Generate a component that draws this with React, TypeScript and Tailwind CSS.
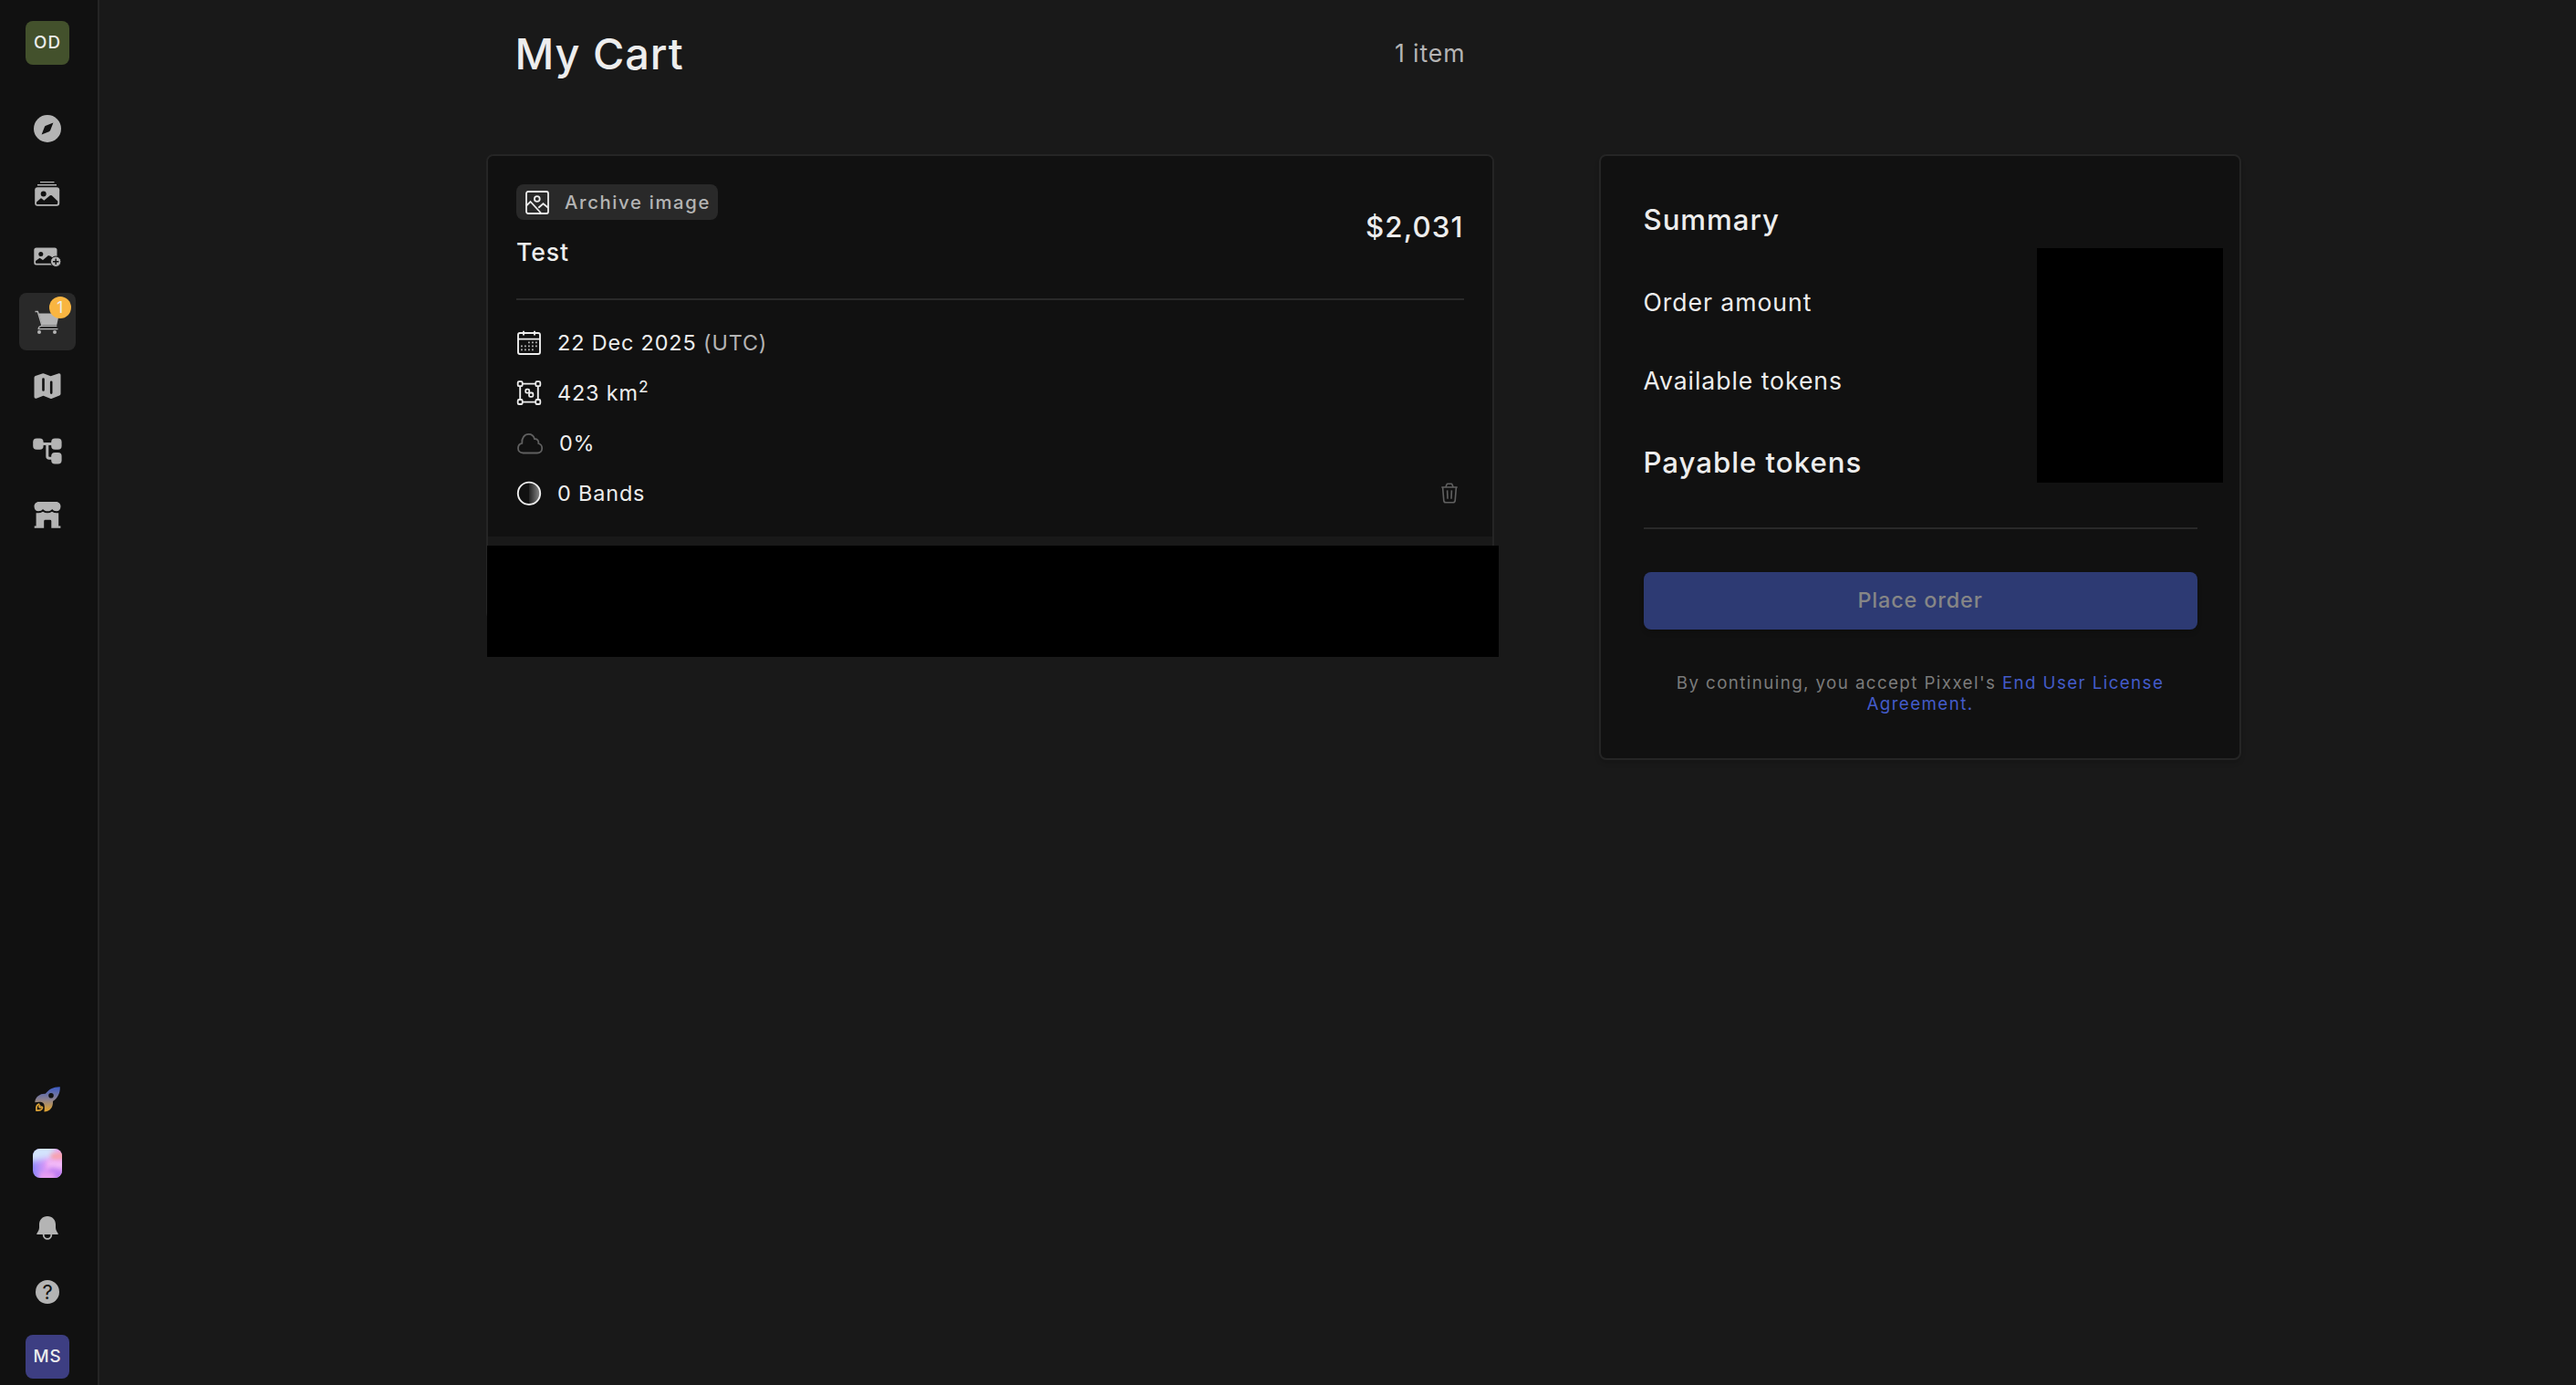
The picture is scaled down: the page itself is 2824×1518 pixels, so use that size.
import type { ReactNode } from 'react'

const Icon = ({ children, size = 32 }: { children: ReactNode; size?: number }) => (
  <svg width={size} height={size} viewBox={`0 0 ${size} ${size}`} fill="none" className="flex-none">
    {children}
  </svg>
)

const CompassIcon = () => (
  <Icon>
    <circle cx="16" cy="16" r="15" fill="#b4b4b4" />
    <path d="M22.4 9.6L19.2 17.8Q18.9 18.8 17.8 19.2L9.6 22.4L12.8 14.2Q13.1 13.2 14.2 12.8Z" fill="#111111" />
  </Icon>
)

const GalleryIcon = () => (
  <Icon>
    <path d="M8 3.6H23.5M5 6.8H26" stroke="#b4b4b4" strokeWidth="1.4" />
    <rect x="2.2" y="9.2" width="27" height="20.6" rx="3" fill="#b4b4b4" />
    <circle cx="11.7" cy="16.6" r="3" fill="#111111" />
    <path d="M4 27.5V25.5L8.5 21.5Q9 21.2 9.5 21.5L12.3 23.8L18.8 18.2Q19.8 17.6 20.8 18.2L27.3 24.5V26.5Q27.3 28 25.8 28H5Q4 28 4 27.5Z" fill="#111111" />
  </Icon>
)

const ImagePlusIcon = () => (
  <Icon>
    <rect x="1.3" y="5.4" width="25.2" height="19" rx="2.5" fill="#b4b4b4" />
    <circle cx="8.8" cy="12.4" r="2.5" fill="#111111" />
    <path d="M3 22V20L7.5 16.8L11 19L17 14L19.5 14.8L24.5 19V22.8H4Q3 22.8 3 22Z" fill="#111111" />
    <circle cx="25.2" cy="20.7" r="5.7" fill="#b4b4b4" stroke="#111111" strokeWidth="1" />
    <path d="M25.2 17.5V23.9M22 20.7H28.4" stroke="#111111" strokeWidth="1.4" />
  </Icon>
)

const CartIcon = () => (
  <Icon>
    <path d="M6.6 6.4H29L26.2 19.4H10.3Z" fill="#b4b4b4" />
    <path d="M2.5 4.4H5.3L10 19.8" stroke="#b4b4b4" strokeWidth="1.5" />
    <path d="M26.3 20.3H9Q6.3 20.6 6.2 23.6H27.5" stroke="#b4b4b4" strokeWidth="1.3" />
    <circle cx="7" cy="27" r="2" fill="#b4b4b4" />
    <circle cx="24" cy="27" r="2" fill="#b4b4b4" />
  </Icon>
)

const MapIcon = () => (
  <Icon>
    <path
      d="M1.5 7Q1.5 5.6 2.8 5L10.3 2.4Q11.3 2 12.3 2.4L19.5 5.3L28.5 2.3Q30.5 2 30.5 4V24.5Q30.5 26 29.2 26.6L21 29.8Q20 30.2 19 29.8L11.5 26.8L3.8 29.7Q1.5 30.2 1.5 28Z"
      fill="#b4b4b4"
    />
    <path d="M11.5 8.6V20.4M20.2 11.8V23.6" stroke="#111111" strokeWidth="2.6" strokeLinecap="round" />
  </Icon>
)

const WorkflowIcon = () => (
  <Icon>
    <path d="M8 8.5H26M15.8 8.5V22Q15.8 24.3 18 24.3H26" stroke="#b4b4b4" strokeWidth="3" />
    <rect x="0.2" y="2.4" width="11.4" height="12.4" rx="4" fill="#b4b4b4" />
    <rect x="20.2" y="2.4" width="11.4" height="12.4" rx="4" fill="#b4b4b4" />
    <rect x="20.2" y="18" width="11.4" height="12.4" rx="4" fill="#b4b4b4" />
  </Icon>
)

const StoreIcon = () => (
  <Icon>
    <path
      d="M6.5 2H25.5C28.5 2 30.5 4.5 30.5 7C30.5 10.5 28.5 12.3 26 12.3C23.6 12.3 22.3 11.3 21.2 10C20 11.6 18.3 12.3 16.2 12.3C14 12.3 12.3 11.6 11 10C9.8 11.3 8.4 12.3 6 12.3C3.5 12.3 1.5 10.5 1.5 7C1.5 4.5 3.5 2 6.5 2Z"
      fill="#b4b4b4"
    />
    <path
      d="M3.6 14.2Q8 14.8 11 12.8Q16 15.8 21 12.8Q24 14.8 28.2 14.2V28.4H30.4V30.8H20.3V23.2Q20.3 21.8 18.8 21.8H13.7Q12.2 21.8 12.2 23.2V30.8H1.7V28.4H3.6Z"
      fill="#b4b4b4"
    />
  </Icon>
)

const RocketIcon = () => (
  <Icon>
    <defs>
      <linearGradient id="rocket" x1="16" y1="2" x2="16" y2="30" gradientUnits="userSpaceOnUse">
        <stop stopColor="#3b5bc8" />
        <stop offset="0.5" stopColor="#8a8190" />
        <stop offset="0.9" stopColor="#d9a036" />
      </linearGradient>
    </defs>
    <path
      d="M29.8 2.2C22.5 2 17.5 4.8 13.8 9.8C8.5 9.4 2.5 12.8 2.3 19.3C6.5 18.3 10 18.6 11.4 20C13 21.6 13.2 25.5 12.4 29.6C19 29.2 22.4 24.5 22 18C27 14.5 30 9.5 29.8 2.2Z"
      fill="url(#rocket)"
    />
    <circle cx="20" cy="11.8" r="2.8" fill="#111111" />
    <path d="M7.3 20.8C4.2 21.5 3.6 25 4 28C7 28.4 10.2 27.8 10.5 25C10.3 23.6 9 24.4 7.8 24.8C6.7 24.8 6.7 23.2 8.3 22.2" stroke="#d9a036" strokeWidth="1.8" />
  </Icon>
)

const BellIcon = () => (
  <Icon>
    <circle cx="16" cy="23.5" r="4.3" stroke="#b4b4b4" strokeWidth="1.8" />
    <path
      d="M16 3C10.5 3 7 7 7 12V15.5C7 18 5.6 19.8 4.2 22.2Q4 23 4.8 23H27.2Q28 23 27.8 22.2C26.4 19.8 25 18 25 15.5V12C25 7 21.5 3 16 3Z"
      fill="#b4b4b4"
    />
  </Icon>
)

const HelpIcon = () => (
  <div className="flex h-[26px] w-[26px] items-center justify-center rounded-full bg-[#b4b4b4] text-[22px] text-[#111111]">
    ?
  </div>
)

const GradientIcon = () => (
  <div className="relative h-8 w-8 overflow-hidden rounded-lg bg-linear-to-r from-[#8f86fb] via-[#e59bf6] to-[#eda6f6]">
    <div className="absolute -left-2 -top-2 h-5 w-8 -rotate-12 bg-[#d3e4fd] blur-[3px]" />
    <div className="absolute -right-2 top-1 h-2 w-5 -rotate-6 bg-[#f7a3ae] blur-[2px]" />
    <div className="absolute -right-1 top-3.5 h-2.5 w-5 rotate-6 bg-[#f6bdf7] blur-[2px]" />
    <div className="absolute -bottom-1.5 -right-1 h-4 w-5 rotate-12 bg-[#bd7cf2] blur-[3px]" />
    <div className="absolute -bottom-1.5 left-2 h-3 w-4 bg-[#e79df2] blur-[2px]" />
  </div>
)

const ArchiveIcon = () => (
  <Icon size={26}>
    <rect x="1" y="1" width="24" height="24" rx="2" stroke="#ededed" strokeWidth="1.8" />
    <circle cx="12.8" cy="9" r="2.9" stroke="#ededed" strokeWidth="1.8" />
    <path d="M1 16.5L5.5 12L17.5 25M14.3 18.8L19.5 14.3L25 18.8" stroke="#ededed" strokeWidth="1.8" />
  </Icon>
)

const CalendarIcon = () => (
  <Icon size={28}>
    <rect x="2" y="3" width="24" height="23" rx="2" stroke="#ededed" strokeWidth="1.9" />
    <path d="M2 9.6H26M8 0.8V5.4M20 0.8V5.4" stroke="#ededed" strokeWidth="1.9" />
    <path d="M13 13.3H23.5M5 17.3H23.5M5 21.3H19.5" stroke="#b4b4b4" strokeWidth="1.8" strokeDasharray="1.8 2.2" />
  </Icon>
)

const AreaIcon = () => (
  <Icon size={28}>
    <path d="M7 3.6H21M7 23.6H21M4.2 6.4V21M23.8 6.4V21" stroke="#ededed" strokeWidth="1.9" />
    <g stroke="#ededed" strokeWidth="1.8">
      <rect x="1.7" y="1.2" width="5" height="5" rx="1.3" />
      <rect x="21.3" y="1.2" width="5" height="5" rx="1.3" />
      <rect x="1.7" y="21" width="5" height="5" rx="1.3" />
      <rect x="21.3" y="21" width="5" height="5" rx="1.3" />
      <rect x="10.2" y="9.7" width="4" height="4" rx="1.4" />
      <rect x="14" y="13.5" width="4.4" height="4.4" rx="1.4" />
    </g>
  </Icon>
)

const CloudIcon = () => (
  <Icon size={30}>
    <path
      d="M7.5 25.5C4 25.5 2 23.2 2 20.3C2 17.5 3.8 15.2 6.3 14.8C5.8 9 9 4.8 13.5 4.8C17 4.8 19.2 7 20 10C23 9.8 24.8 12 24.3 15C26.8 15.8 28.2 17.8 28.2 20.2C28.2 23.3 26 25.5 23 25.5Z"
      stroke="#606060"
      strokeWidth="1.8"
    />
  </Icon>
)

const BandsIcon = () => (
  <Icon size={28}>
    <defs>
      <linearGradient id="bands" x1="14" y1="0" x2="26" y2="0" gradientUnits="userSpaceOnUse">
        <stop stopColor="#222222" />
        <stop offset="1" stopColor="#8a8a8a" />
      </linearGradient>
    </defs>
    <path d="M14 1.5A12.3 12.3 0 0 1 14 26.1Z" fill="url(#bands)" />
    <circle cx="14" cy="13.8" r="12.2" stroke="#ededed" strokeWidth="1.9" />
  </Icon>
)

const TrashIcon = () => (
  <svg width="18" height="23" viewBox="0 0 18 23" fill="none" stroke="#606060" strokeWidth="1.6">
    <path d="M0.3 5H17.7M5 4.8L6 2Q6.2 1.3 7 1.3H11Q11.8 1.3 12 2L13 4.8" />
    <path d="M1.6 5L2.8 19.6Q3 21.7 5 21.7H13Q15 21.7 15.2 19.6L16.4 5" />
    <path d="M6.6 8.4L7 17.8M11.4 8.4L11 17.8" />
  </svg>
)

const Avatar = ({ label, className }: { label: string; className: string }) => (
  <div className={`flex h-12 w-12 items-center justify-center rounded-lg text-[18.75px] font-medium tracking-[1px] text-[#ededed] ${className}`}>
    {label}
  </div>
)

const NavItem = ({ children, active, badge }: { children: ReactNode; active?: boolean; badge?: number }) => (
  <div className={`relative flex h-[62.5px] w-[62.5px] flex-none items-center justify-center rounded-lg ${active ? 'bg-[#292929]' : ''}`}>
    {children}
    {badge && (
      <span className="absolute right-[5.5px] top-[4px] flex h-6 w-6 items-center justify-center rounded-full bg-[#f9b541] text-[17px] text-[#ededed]">
        {badge}
      </span>
    )}
  </div>
)

const Sidebar = () => (
  <aside className="flex w-[109px] flex-none flex-col items-center justify-between border-r-2 border-[#252525] bg-[#111111] pr-[3px] pt-[15.75px]">
    <nav className="flex flex-col gap-2">
      <div className="mb-[23.5px]">
        <NavItem>
          <Avatar label="OD" className="bg-[#43512c]" />
        </NavItem>
      </div>
      <NavItem><CompassIcon /></NavItem>
      <NavItem><GalleryIcon /></NavItem>
      <NavItem><ImagePlusIcon /></NavItem>
      <NavItem active badge={1}><CartIcon /></NavItem>
      <NavItem><MapIcon /></NavItem>
      <NavItem><WorkflowIcon /></NavItem>
      <NavItem><StoreIcon /></NavItem>
    </nav>
    <nav className="flex flex-col gap-2">
      <NavItem><RocketIcon /></NavItem>
      <NavItem><GradientIcon /></NavItem>
      <NavItem><BellIcon /></NavItem>
      <NavItem><HelpIcon /></NavItem>
      <NavItem><Avatar label="MS" className="bg-[#3d3e82]" /></NavItem>
    </nav>
  </aside>
)

const DetailRow = ({ icon, children }: { icon: ReactNode; children: ReactNode }) => (
  <div className="flex h-[54.8px] items-center text-[23.4px] tracking-[0.86px]">
    {icon}
    <span className="ml-[17px] pb-px">{children}</span>
  </div>
)

const CartItem = () => (
  <div className="relative h-[511px] rounded-lg border-2 border-[#252525] bg-[#191919]">
    <div className="h-[417px] rounded-t-md bg-[#111111] px-[31px] pt-[31px]">
      <div className="flex h-[93px] items-center justify-between">
        <div className="h-full">
          <div className="flex h-[39px] w-[220.5px] items-center rounded-lg bg-[#292929] pl-[9.5px] text-[20.3px] font-medium tracking-[1.65px] text-[#b4b4b4]">
            <ArchiveIcon />
            <span className="ml-[17.5px] whitespace-nowrap pt-0.5">Archive image</span>
          </div>
          <p className="mt-[15px] text-[26.6px] font-medium leading-10 tracking-[0.94px]">Test</p>
        </div>
        <p className="pt-px text-[31.25px] font-medium tracking-[1.1px]">$2,031</p>
      </div>
      <hr className="mt-8 border-t-2 border-[#292929]" />
      <div className="mt-5 flex items-end justify-between">
        <div>
          <DetailRow icon={<CalendarIcon />}>
            22 Dec 2025 <span className="text-[#b4b4b4]">(UTC)</span>
          </DetailRow>
          <DetailRow icon={<AreaIcon />}>
            <span className="flex">
              423 km<span className="-mt-0.5 text-[17.5px]">2</span>
            </span>
          </DetailRow>
          <DetailRow icon={<CloudIcon />}>0%</DetailRow>
          <DetailRow icon={<BandsIcon />}>0 Bands</DetailRow>
        </div>
        <button className="mb-4 mr-[6.5px]">
          <TrashIcon />
        </button>
      </div>
    </div>
    <div className="absolute -left-px top-[427px] h-[122px] w-[1108.5px] bg-black" />
  </div>
)

const Summary = () => (
  <section className="relative h-[663.5px] w-[704px] flex-none rounded-lg border-2 border-[#252525] bg-[#111111] px-[46.5px] pt-[49.5px] tracking-[0.94px] shadow-md">
    <h2 className="text-[31.25px] font-medium leading-10">Summary</h2>
    <p className="mt-[50.5px] text-[26.6px] leading-10">Order amount</p>
    <p className="mt-[46px] text-[26.6px] leading-10">Available tokens</p>
    <p className="mt-[50px] text-[31.25px] font-medium leading-10">Payable tokens</p>
    <hr className="mt-[51px] border-t-2 border-[#292929]" />
    <button className="mt-[47px] h-[62.5px] w-full rounded-lg bg-[#2d3a73] pb-px text-[23.4px] font-medium tracking-[0.86px] text-[#868686] shadow-md">
      Place order
    </button>
    <p className="mt-[47.5px] text-center text-[18.75px] leading-[23.4px] tracking-[1.4px] text-[#7b7b7b]">
      By continuing, you accept Pixxel's{' '}
      <a className="text-[#435bc9]">
        <span>End User License</span>
        <br />
        <span>Agreement.</span>
      </a>
    </p>
    <div className="absolute right-[18px] top-[100.5px] h-[257.5px] w-[204.5px] bg-black" />
  </section>
)

export const App = () => {
  return (
    <div className="flex h-screen overflow-hidden bg-[#191919] font-['Inter',sans-serif] text-[#ededed]">
      <Sidebar />
      <main className="flex flex-1 items-start pl-[424px]">
        <div className="w-[1104.5px] flex-none">
          <header className="mb-[51px] flex h-[118px] items-center justify-between pl-[31.5px] pr-[31px]">
            <h1 className="text-[46.9px] font-medium tracking-[0.94px]">My Cart</h1>
            <span className="text-[26.6px] tracking-[0.94px] text-[#b4b4b4]">1 item</span>
          </header>
          <CartItem />
        </div>
        <div className="ml-[115.5px] mt-[169px]">
          <Summary />
        </div>
      </main>
    </div>
  )
}

export default App
